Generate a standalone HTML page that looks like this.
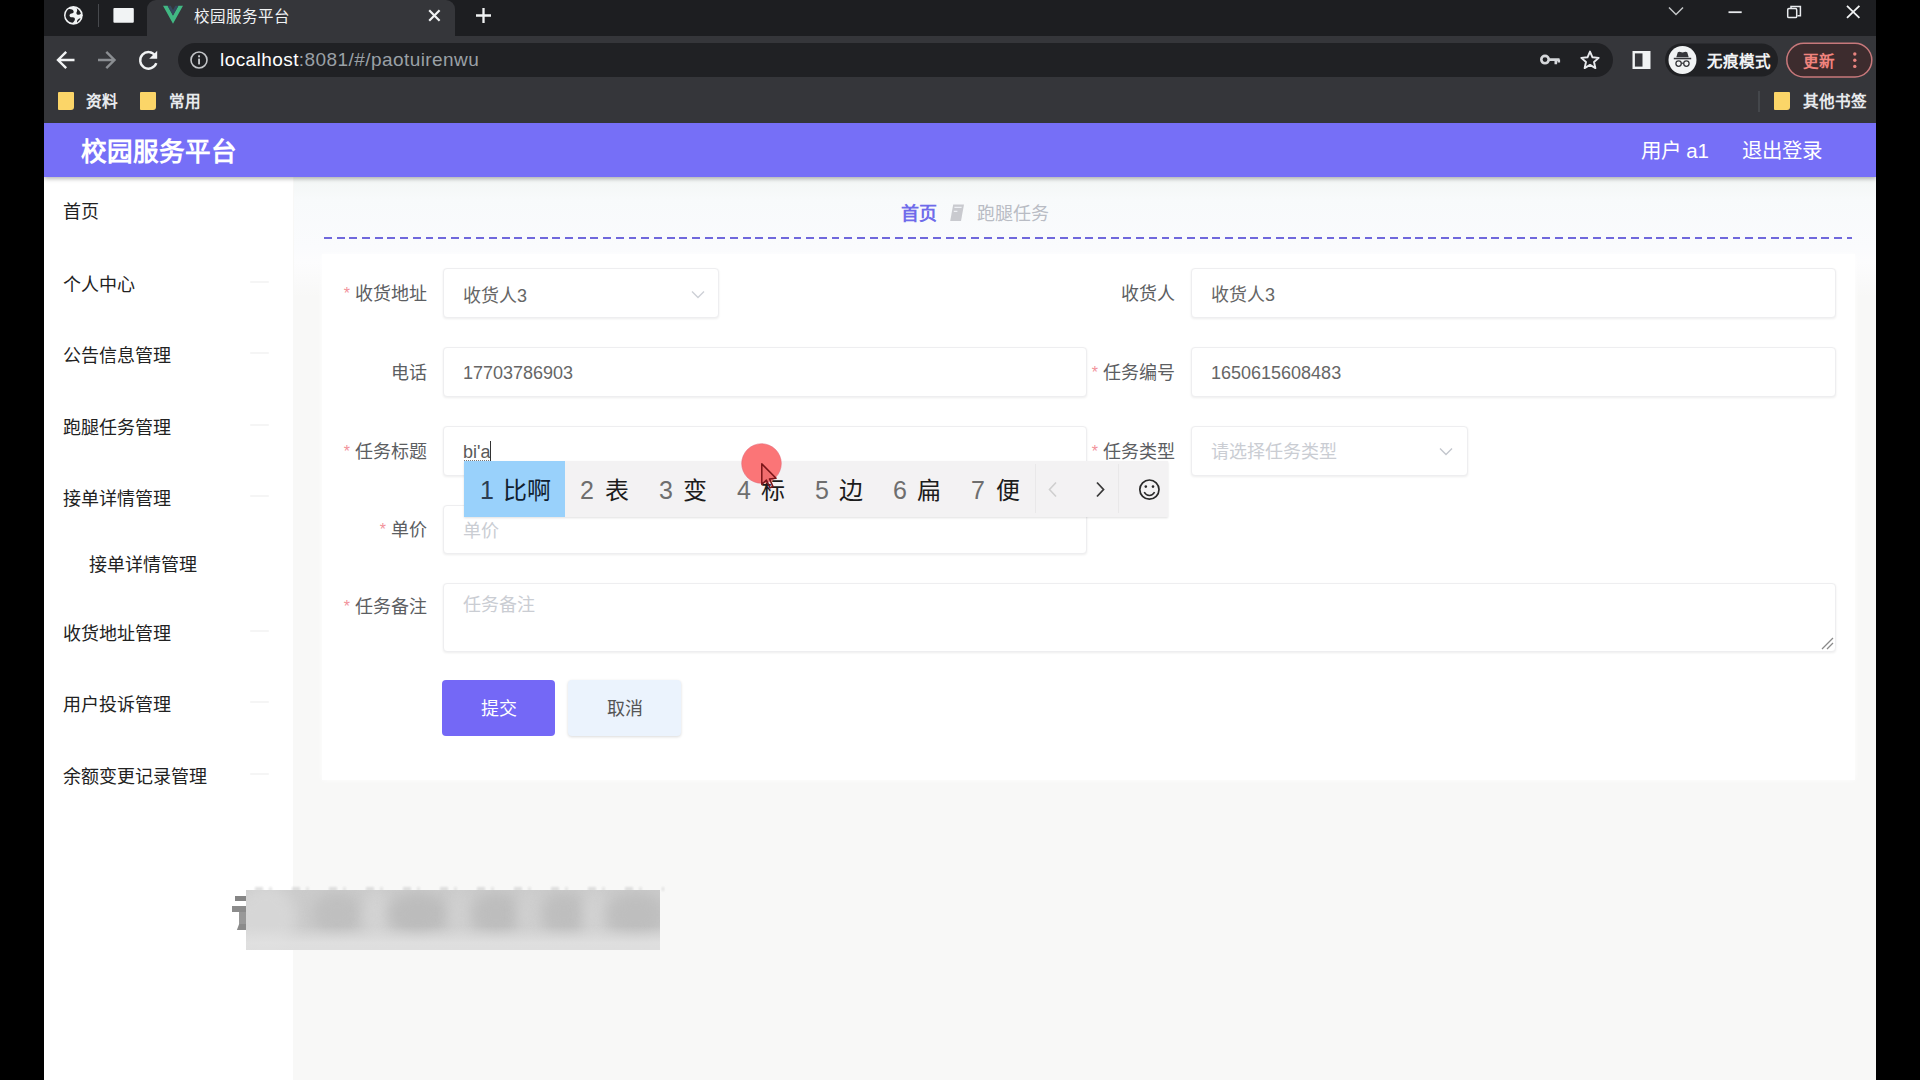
<!DOCTYPE html>
<html lang="zh-CN">
<head>
<meta charset="utf-8">
<title>校园服务平台</title>
<style>
*{box-sizing:border-box;margin:0;padding:0}
html,body{width:1920px;height:1080px;overflow:hidden;background:#000}
body{font-family:"Liberation Sans",sans-serif;position:relative;color:#333}
.abs{position:absolute}
#win{position:absolute;left:44px;top:0;width:1832px;height:1080px;background:#f8f8f7;overflow:hidden}
/* ---------- browser chrome ---------- */
#tabstrip{position:absolute;left:0;top:0;width:1832px;height:36px;background:#1d1e21}
#tab{position:absolute;left:103px;top:0;width:308px;height:36px;background:#35363a;border-radius:9px 9px 0 0}
#tabtitle{position:absolute;left:46.5px;top:6.5px;font-size:15.5px;line-height:20px;color:#f1f3f4;white-space:nowrap}
#toolbar{position:absolute;left:0;top:36px;width:1832px;height:47px;background:#35363a}
#omni{position:absolute;left:134px;top:6.5px;width:1435px;height:34px;border-radius:17px;background:#202124}
#url{position:absolute;left:42px;top:6.5px;font-size:19px;line-height:22px;letter-spacing:.43px;color:#9aa0a6;white-space:nowrap}
#url b{font-weight:normal;color:#fff}
#bookmarks{position:absolute;left:0;top:83px;width:1832px;height:41px;background:#35363a}
.bm{position:absolute;top:9px;line-height:20px;font-size:15.6px;margin-left:1px;color:#e8eaed;white-space:nowrap;font-weight:bold}
.folder{position:absolute;width:16px;height:18px;background:#fbd568;border-radius:1px 1px 3px 1px}
/* ---------- app ---------- */
#hdr{position:absolute;left:0;top:123.4px;width:1832px;height:53.2px;background:#766ff7;box-shadow:0 2px 4px rgba(0,0,0,.28);z-index:5}
#hdr .title{position:absolute;left:37px;top:12.5px;font-size:25.6px;font-weight:bold;color:#fff;white-space:nowrap;line-height:32px}
#hdr .r{position:absolute;top:13.8px;font-size:20.5px;color:#fff;white-space:nowrap;line-height:28px}
#side{position:absolute;left:0;top:177px;width:249px;height:903px;background:#fff}
.mi{position:absolute;left:19px;font-size:18px;color:#222;white-space:nowrap;line-height:24px;margin-top:1.3px}
.mi.sub{left:45px}
.arr{position:absolute;left:206px;width:19px;height:2px;background:#f5f5f5;border-radius:1px}
#main{position:absolute;left:250px;top:177px;width:1582px;height:903px;background:#f8f8f7}
#maintop{position:absolute;left:0;top:0;width:1582px;height:120px;background:linear-gradient(#f3f6f5 0,#f8fafb 22px,#fafbfd 70px,#fcfcfd 85px,rgba(248,248,247,0) 120px)}
#crumb,.crumb{position:absolute;top:25.5px;font-size:18px;white-space:nowrap;line-height:22px}
#dash{position:absolute;left:30.2px;top:59.9px;width:1528px;height:2.6px;background:repeating-linear-gradient(90deg,#7068dc 0 7.9px,transparent 7.9px 12.69px);filter:blur(.5px)}
#card{position:absolute;left:28px;top:77px;width:1533px;height:526px;background:#fff;box-shadow:0 0 5px rgba(255,255,255,.9)}
.lbl{position:absolute;font-size:18px;color:#5c5e62;white-space:nowrap;line-height:24px;text-align:right;margin-top:1.2px}
.lbl i{font-style:normal;color:#f2929a;margin-right:5px;font-size:16px;position:relative;top:-1.5px}
.inp{position:absolute;height:50px;border:1px solid #eeeef0;border-radius:4px;background:#fff;box-shadow:0 1px 2.5px rgba(0,0,0,.075);font-size:18px;color:#666;line-height:50px;padding-left:19px;white-space:nowrap}
.ph{color:#cacdd3}
.btn{position:absolute;top:426px;width:113px;height:56px;border-radius:4px;font-size:18px;text-align:center;line-height:58.4px}

/* ---------- IME ---------- */
#ime{position:absolute;left:420px;top:461px;width:704px;height:56px;background:#f3f2f3;z-index:20;box-shadow:0 1px 2px rgba(0,0,0,.12)}
#ime .hl{position:absolute;left:0;top:0;width:101px;height:100%;background:#99d1fb}
#ime .n{position:absolute;top:13.5px;font-size:25px;line-height:30px;color:#6e6e6e;white-space:nowrap}
#ime .c{position:absolute;top:13.5px;font-size:24px;line-height:32px;color:#1c1c1c;white-space:nowrap}
#ime .sep{position:absolute;top:3px;width:1px;height:49px;background:#e9e8e9}
#blur{position:absolute;left:202.2px;top:890px;width:414px;height:59.6px;background:#cbcbcb;overflow:hidden;z-index:8}
#blur b{position:absolute;left:0;top:0;width:100%;height:100%;display:block;background:linear-gradient(rgba(200,200,200,.0) 0,rgba(200,200,200,0) 60%,rgba(226,226,226,.85) 88%,rgba(224,224,224,.9) 100%)}
#blur i{position:absolute;display:block;border-radius:50%;filter:blur(7px)}
</style>
</head>
<body>
<div id="win">
  <div id="tabstrip">
    <div id="tab"><div id="tabtitle">校园服务平台</div></div>
  </div>
  <div id="toolbar">
    <div id="omni"><div id="url"><b>localhost</b>:8081/#/paotuirenwu</div></div>
  </div>
  <div id="bookmarks">
    <div class="folder" style="left:14px;top:9px"></div><div class="bm" style="left:41px">资料</div>
    <div class="folder" style="left:96px;top:9px"></div><div class="bm" style="left:124px">常用</div>
    <div class="folder" style="left:1730px;top:9px"></div><div class="bm" style="left:1758px">其他书签</div>
  </div>


  <svg id="chromeicons" class="abs" style="left:0;top:0;z-index:4" width="1832" height="124" viewBox="0 0 1832 124" fill="none">
    <!-- pinned tab: globe -->
    <circle cx="29.4" cy="15.3" r="9.4" fill="#f1f3f4"/>
    <path d="M24.3 9.3c2.2-.6 4.4.2 5.2 1.6.7 1.3-.5 2.3-2 2.6-1.5.3-2.3 1.3-1.9 2.6.3 1.1 1.5 1.4 2.6 1.2 1.6-.3 2.9.6 2.7 2.1-.2 1.3-1.2 2.5-2.4 3.4-3.6-.6-6.4-3.3-7-6.9.1-2.7 1.1-5.1 2.8-6.6z" fill="#202124"/>
    <path d="M32.5 8.3c2.2 1.1 3.8 3.1 4.4 5.5-.9.9-2.2 1.3-3.3.9-1.3-.5-1.5-1.9-.8-3 .6-1 .5-2.3-.3-3.4zM36.6 18.3c-.7 1.7-1.9 3.2-3.5 4.2-.4-1.2.1-2.5 1.1-3.3.7-.6 1.6-.9 2.4-.9z" fill="#202124"/>
    <rect x="54" y="4" width="1" height="23" fill="#47494d"/>
    <!-- pinned tab: white rect -->
    <rect x="69.4" y="8" width="20.4" height="14.8" rx="1" fill="#f1f3f4"/>
    <!-- vue logo -->
    <path d="M119 5.8h4.6l5.4 9.6 5.4-9.6h4.6l-10 18z" fill="#41b883"/>
    <path d="M123.6 5.8h3.1l2.3 4.1 2.3-4.1h3.1l-5.4 9.6z" fill="#35495e"/>
    <!-- tab close -->
    <path d="M385.2 10.3l10.4 10.4M395.6 10.3l-10.4 10.4" stroke="#f1f3f4" stroke-width="2.2"/>
    <!-- new tab plus -->
    <path d="M432 15.5h15M439.5 8v15" stroke="#f1f3f4" stroke-width="2.3"/>
    <!-- window controls -->
    <path d="M1625 7.5l7 7 7-7" stroke="#c4c7c9" stroke-width="1.5"/>
    <path d="M1684.5 12.2h13.2" stroke="#e8eaed" stroke-width="1.8"/>
    <rect x="1743.7" y="8.6" width="9" height="9" rx="1.2" stroke="#e8eaed" stroke-width="1.5"/>
    <path d="M1747 8.6v-2.2h9.4v9.4h-3" stroke="#e8eaed" stroke-width="1.5"/>
    <path d="M1803 5.8l12.4 12M1815.4 5.8l-12.4 12" stroke="#f1f3f4" stroke-width="1.8"/>
    <!-- back -->
    <path d="M30.5 60h-16M22.2 51.8l-8.2 8.2 8.2 8.2" stroke="#f1f3f4" stroke-width="2.4"/>
    <!-- forward -->
    <path d="M54 60h16M62.3 51.8l8.2 8.2-8.2 8.2" stroke="#8b8e92" stroke-width="2.4"/>
    <!-- reload -->
    <path d="M111.3 55.6a8.3 8.3 0 1 0 1 7.6" stroke="#f1f3f4" stroke-width="2.4"/>
    <path d="M113.2 50.8v8h-8z" fill="#f1f3f4"/>
    <!-- info -->
    <circle cx="155" cy="60" r="8" stroke="#c3c5c8" stroke-width="1.6"/>
    <rect x="154.1" y="58.6" width="1.9" height="5.8" fill="#c3c5c8"/>
    <rect x="154.1" y="55.3" width="1.9" height="2" fill="#c3c5c8"/>
    <!-- key -->
    <circle cx="1501" cy="59.6" r="3.7" stroke="#d5d7da" stroke-width="2.6"/>
    <path d="M1505 59.6h10.5M1511.8 59.6v4.6M1514.8 59.6v3" stroke="#d5d7da" stroke-width="2.6"/>
    <!-- star -->
    <path d="M1546 51.6l2.5 5.7 6.2.6-4.7 4.1 1.4 6.1-5.4-3.2-5.4 3.2 1.4-6.1-4.7-4.1 6.2-.6z" stroke="#e8eaed" stroke-width="1.9" stroke-linejoin="round"/>
    <!-- side panel -->
    <rect x="1589.7" y="52.2" width="15.6" height="15.6" stroke="#f1f3f4" stroke-width="2.4"/>
    <rect x="1598.5" y="52" width="7" height="16" fill="#f1f3f4"/>
    <!-- incognito chip -->
    <rect x="1621" y="43.5" width="113" height="33" rx="16.5" fill="#202124"/>
    <circle cx="1638.5" cy="60" r="14" fill="#f1f3f4"/>
    <path d="M1633.8 52.2l1.6-.5 3.1.9 3.1-.9 1.6.5 1.5 5.1h-12.4z" fill="#35363a"/>
    <rect x="1629.8" y="57.8" width="17.4" height="1.5" fill="#35363a"/>
    <circle cx="1634.6" cy="63.6" r="2.7" stroke="#35363a" stroke-width="1.3"/>
    <circle cx="1642.4" cy="63.6" r="2.7" stroke="#35363a" stroke-width="1.3"/>
    <path d="M1637.3 63.2h2.4" stroke="#35363a" stroke-width="1.2"/>
    <!-- update pill -->
    <rect x="1742.8" y="43.3" width="85" height="33.6" rx="16.8" fill="#3d2c2e" stroke="#c7787b" stroke-width="1.5"/>
    <circle cx="1810.8" cy="54" r="1.7" fill="#e8837f"/><circle cx="1810.8" cy="60.2" r="1.7" fill="#e8837f"/><circle cx="1810.8" cy="66.4" r="1.7" fill="#e8837f"/>
    <!-- bookmarks separator -->
    <rect x="1714.5" y="91" width="1" height="21" fill="#55585c"/>
  </svg>
  <div class="abs" style="left:1663px;top:52px;font-size:15.5px;color:#f1f3f4;white-space:nowrap;z-index:5;font-weight:bold;line-height:19px">无痕模式</div>
  <div class="abs" style="left:1759px;top:52.2px;font-size:15.5px;color:#f0837d;white-space:nowrap;z-index:5;font-weight:bold;line-height:19px">更新</div>

  <div id="hdr">
    <div class="title">校园服务平台</div>
    <div class="r" style="left:1596.5px">用户 a1</div>
    <div class="r" style="left:1697.5px">退出登录</div>
  </div>

  <div id="side">
    <div class="mi" style="top:22px">首页</div>
    <div class="arr" style="top:104px"></div>
    <div class="arr" style="top:175px"></div>
    <div class="arr" style="top:247px"></div>
    <div class="arr" style="top:318px"></div>
    <div class="arr" style="top:453px"></div>
    <div class="arr" style="top:524px"></div>
    <div class="arr" style="top:596px"></div>
    <div class="mi" style="top:95px">个人中心</div>
    <div class="mi" style="top:166px">公告信息管理</div>
    <div class="mi" style="top:238px">跑腿任务管理</div>
    <div class="mi" style="top:309px">接单详情管理</div>
    <div class="mi sub" style="top:375px">接单详情管理</div>
    <div class="mi" style="top:444px">收货地址管理</div>
    <div class="mi" style="top:515px">用户投诉管理</div>
    <div class="mi" style="top:587px">余额变更记录管理</div>
  </div>

  <div id="main">
    <div id="maintop"></div>
    <div class="crumb" style="left:607px;color:#6f6bea;font-weight:bold">首页</div>
    <div class="crumb" style="left:682.5px;color:#b9bcc4">跑腿任务</div>
    <svg class="abs" style="left:655px;top:26px;filter:blur(.5px)" width="15.6" height="19.5" viewBox="1 0 13 20" preserveAspectRatio="none"><path d="M4.5 1.5h9l-2.5 17h-9z" fill="#c9cacf"/><path d="M5.5 4.5h6M5 8.5h3" stroke="#eef0f4" stroke-width="1.3"/></svg>
    <div id="dash"></div>
    <div id="card">
      <div class="lbl" style="left:0;width:105px;top:27px"><i>*</i>收货地址</div>
      <div class="inp" style="left:121px;top:14px;width:276px;padding-top:2px">收货人3</div>
      <div class="lbl" style="left:700px;width:153px;top:27px">收货人</div>
      <div class="inp" style="left:869px;top:14px;width:645px;padding-top:1.2px">收货人3</div>

      <div class="lbl" style="left:0;width:105px;top:106px">电话</div>
      <div class="inp" style="left:121px;top:93px;width:644px">17703786903</div>
      <div class="lbl" style="left:700px;width:153px;top:106px"><i>*</i>任务编号</div>
      <div class="inp" style="left:869px;top:93px;width:645px">1650615608483</div>

      <div class="lbl" style="left:0;width:105px;top:185px"><i>*</i>任务标题</div>
      <div class="inp" style="left:121px;top:172px;width:644px;color:#5a5a5a">bi'a<span class="abs" style="left:19.5px;top:32.6px;width:27px;height:0;border-top:1.4px dotted #777"></span><span class="abs" style="left:46.2px;top:14.4px;width:1.3px;height:20.2px;background:#333"></span></div>
      <div class="lbl" style="left:700px;width:153px;top:185px"><i>*</i>任务类型</div>
      <div class="inp ph" style="left:869px;top:172px;width:277px">请选择任务类型</div>

      <div class="lbl" style="left:0;width:105px;top:263px"><i>*</i>单价</div>
      <div class="inp ph" style="left:121px;top:251px;width:644px;height:49px">单价</div>

      <div class="lbl" style="left:0;width:105px;top:340px"><i>*</i>任务备注</div>
      <div class="inp ph" style="left:121px;top:329px;width:1393px;height:69px;line-height:43.6px">任务备注</div>


      <svg class="abs" style="left:368.5px;top:35.5px" width="14" height="9" viewBox="0 0 14 9" fill="none"><path d="M1 1.5l6 6 6-6" stroke="#cdd0d6" stroke-width="1.4"/></svg>
      <svg class="abs" style="left:1117px;top:193.4px" width="14" height="9" viewBox="0 0 14 9" fill="none"><path d="M1 1.5l6 6 6-6" stroke="#c3c6cd" stroke-width="1.4"/></svg>
      <svg class="abs" style="left:1498px;top:382px" width="14" height="14" viewBox="0 0 14 14" fill="none"><path d="M13 2L2 13M13 7l-6 6" stroke="#8a8a8a" stroke-width="1.3"/></svg>
      <div class="btn" style="left:120px;background:#7468f6;color:#fff">提交</div>
      <div class="btn" style="left:246px;background:#ebf3fd;color:#555;box-shadow:0 1px 3px rgba(0,0,0,.15)">取消</div>
    </div>
  </div>

  <!-- IME candidate window -->
  <div id="ime">
    <div class="hl"></div>
    <div class="n" style="left:16px;color:#2b3d52">1</div><div class="c" style="left:39px;color:#10202f">比啊</div>
    <div class="n" style="left:116px">2</div><div class="c" style="left:141px">表</div>
    <div class="n" style="left:195px">3</div><div class="c" style="left:219px">变</div>
    <div class="n" style="left:273px">4</div><div class="c" style="left:297px">标</div>
    <div class="n" style="left:351px">5</div><div class="c" style="left:375px">边</div>
    <div class="n" style="left:429px">6</div><div class="c" style="left:453px">扁</div>
    <div class="n" style="left:507px">7</div><div class="c" style="left:532px">便</div>
    <div class="sep" style="left:571px"></div><div class="sep" style="left:654px"></div>
    <svg class="abs" style="left:571px;top:0" width="133" height="55" viewBox="0 0 133 55" fill="none">
      <path d="M21 21.5l-6.5 7 6.5 7" stroke="#cfcfcf" stroke-width="1.6"/>
      <path d="M62 21.5l6.5 7-6.5 7" stroke="#3a3a3a" stroke-width="1.8"/>
      <circle cx="114.4" cy="28.6" r="9.6" stroke="#2a2a2a" stroke-width="1.7"/>
      <circle cx="110.8" cy="25.6" r="1.3" fill="#2a2a2a"/><circle cx="118" cy="25.6" r="1.3" fill="#2a2a2a"/>
      <path d="M109.2 31.2c1.3 2.3 3.1 3.3 5.2 3.3s3.9-1 5.2-3.3" stroke="#2a2a2a" stroke-width="1.5"/>
    </svg>
  </div>
  <!-- mouse highlight + cursor -->
  <svg class="abs" style="left:690px;top:436px;z-index:30" width="60" height="60" viewBox="0 0 60 60">
    <circle cx="27.5" cy="27.5" r="19.8" fill="#fb7577" stroke="rgba(226,98,118,.6)" stroke-width="0.9"/>
    <path d="M27.8 27.9v20.5l4.6-4.3 3.6 7.8 3-1.3-3.5-7.7 6.6-.700z" fill="rgba(200,60,70,.16)" stroke="#7a1519" stroke-width="1.5" stroke-linejoin="round"/>
  </svg>
  <!-- blurred watermark -->
  <div class="abs" style="left:187px;top:893px;width:16px;height:40px;z-index:7;filter:blur(.7px)">
    <div class="abs" style="left:4px;top:2.5px;width:12px;height:5.5px;background:#858585"></div>
    <div class="abs" style="left:1px;top:13px;width:15px;height:6px;background:#8c8c8c"></div>
    <div class="abs" style="left:8px;top:19px;width:8px;height:13px;background:#999"></div>
    <div class="abs" style="left:7px;top:31px;width:9px;height:6px;background:#8b8b8b;transform:skewX(-20deg)"></div>
  </div>
  <div class="abs" style="left:202px;top:886.5px;width:418px;height:4px;z-index:7;filter:blur(1px);opacity:.55;background:repeating-linear-gradient(90deg,transparent 0 9px,#c9c9c9 9px 17px,transparent 17px 23px,#d5d5d5 23px 26px,transparent 26px 37px)"></div>
  <div id="blur">
    <i style="left:-10px;top:-6px;width:60px;height:70px;background:#d6d6d6"></i>
    <i style="left:66px;top:2px;width:50px;height:44px;background:#bfbfbf"></i>
    <i style="left:118px;top:0px;width:26px;height:50px;background:#d3d3d3"></i>
    <i style="left:142px;top:2px;width:60px;height:44px;background:#bcbcbc"></i>
    <i style="left:204px;top:0px;width:22px;height:50px;background:#d0d0d0"></i>
    <i style="left:226px;top:2px;width:48px;height:44px;background:#bdbdbd"></i>
    <i style="left:272px;top:0px;width:26px;height:48px;background:#cfcfcf"></i>
    <i style="left:296px;top:2px;width:44px;height:44px;background:#bebebe"></i>
    <i style="left:338px;top:0px;width:24px;height:50px;background:#d2d2d2"></i>
    <i style="left:360px;top:2px;width:60px;height:46px;background:#bebebe"></i>
    <b></b>
  </div>
</div>
</body>
</html>
